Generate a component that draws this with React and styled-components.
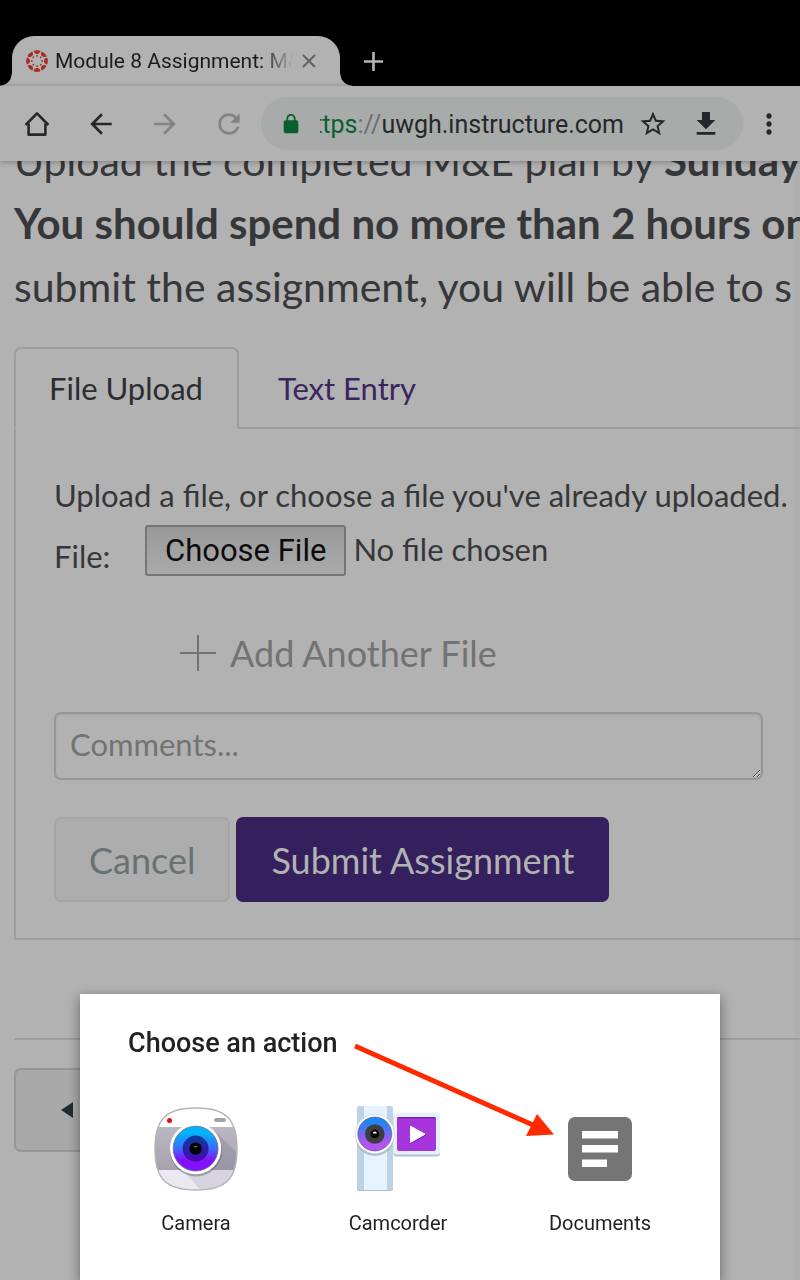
import React, { useState } from "react";
import styled, { createGlobalStyle, css } from "styled-components";

//tokens
const color = {
  page: "#b2b2b2",
  edge: "#aeaeae",
  pill: "#a8abaa",
  border: "#9c9ca2",
  ink: "#25282b",
  text: "#363739",
  muted: "#727373",
  faded: "#828282",
  purple: "#33205c",
  link: "#3b2560",
  secure: "#08602f",
  logo: "#a92a20",
  arrow: "#ff2a00",
};

const lato = `Lato, "Liberation Sans", sans-serif`;
const roboto = `Roboto, "Liberation Sans", sans-serif`;

const paths = {
  back: "M20 11H7.83l5.59-5.59L12 4l-8 8 8 8 1.41-1.41L7.83 13H20v-2z",
  forward: "M12 4l-1.41 1.41L16.17 11H4v2h12.17l-5.58 5.59L12 20l8-8z",
  reload:
    "M17.65 6.35C16.2 4.9 14.21 4 12 4c-4.42 0-7.99 3.58-7.99 8s3.57 8 7.99 8c3.73 0 6.84-2.55 7.73-6h-2.08c-.82 2.33-3.04 4-5.65 4-3.31 0-6-2.69-6-6s2.69-6 6-6c1.66 0 3.14.69 4.22 1.78L13 11h7V4l-2.35 2.35z",
  lock: "M18 8h-1V6c0-2.76-2.24-5-5-5S7 3.24 7 6v2H6c-1.1 0-2 .9-2 2v10c0 1.1.9 2 2 2h12c1.1 0 2-.9 2-2V10c0-1.1-.9-2-2-2zM8.9 8V6c0-1.71 1.39-3.1 3.1-3.1s3.1 1.39 3.1 3.1v2z",
  star: "M22 9.24l-7.19-.62L12 2 9.19 8.63 2 9.24l5.46 4.73L5.82 21 12 17.27 18.18 21l-1.63-7.03L22 9.24zM12 15.4l-3.76 2.27 1-4.28-3.32-2.88 4.38-.38L12 6.1l1.71 4.04 4.38.38-3.32 2.88 1 4.28L12 15.4z",
  download: "M19 9h-4V3H9v6H5l7 7 7-7zM5 18v2h14v-2H5z",
  more: "M12 8c1.1 0 2-.9 2-2s-.9-2-2-2-2 .9-2 2 .9 2 2 2zm0 2c-1.1 0-2 .9-2 2s.9 2 2 2 2-.9 2-2-.9-2-2-2zm0 6c-1.1 0-2 .9-2 2s.9 2 2 2 2-.9 2-2-.9-2-2-2z",
};

const Icon = ({ name, size = 32 }) => (
  <svg width={size} height={size} viewBox="0 0 24 24" fill="currentColor">
    <path d={paths[name]} />
  </svg>
);

const HomeIcon = () => (
  <svg width="26" height="26" viewBox="0 0 26 26" fill="none" stroke="currentColor" strokeWidth="2.6" strokeLinejoin="round">
    <path d="M4.6 12.4V23.6H21.4V12.4" />
    <path d="M1.6 14 13 2.4 24.4 14" />
  </svg>
);

const CrossIcon = () => (
  <svg width="14" height="14" viewBox="0 0 14 14" stroke="currentColor" strokeWidth="2">
    <path d="M1 1 13 13M13 1 1 13" />
  </svg>
);

const PlusIcon = ({ size, weight }) => (
  <svg width={size} height={size} viewBox="0 0 36 36" stroke="currentColor" strokeWidth={weight}>
    <path d="M18 0V36M0 18H36" />
  </svg>
);

//ring of eight domes with dots between them
const CanvasLogo = () => (
  <svg width="22" height="22" viewBox="-11 -11 22 22" fill={color.logo}>
    {[0, 45, 90, 135, 180, 225, 270, 315].map((deg) => (
      <g key={deg} transform={`rotate(${deg})`}>
        <path d="M-3.4-10.2a10.8 10.8 0 0 1 6.8 0C3.1-8.2 1.8-7 0-7S-3.1-8.2-3.4-10.2z" />
        <circle cx="0" cy="-5.2" r=".9" />
      </g>
    ))}
  </svg>
);

const CameraIcon = () => (
  <svg width="84" height="84" viewBox="0 0 84 84">
    <defs>
      <linearGradient id="camLens" x1="0" y1="0" x2="0" y2="1">
        <stop offset=".15" stopColor="#00b4ff" />
        <stop offset=".5" stopColor="#3d6bff" />
        <stop offset=".75" stopColor="#8510ff" />
      </linearGradient>
      <linearGradient id="camMid" x1="0" y1="0" x2="0" y2="1">
        <stop offset="0" stopColor="#0a3f9c" />
        <stop offset="1" stopColor="#4a06b4" />
      </linearGradient>
      <linearGradient id="camBand" x1="0" y1="0" x2="0" y2="1">
        <stop offset="0" stopColor="#bbb7c3" />
        <stop offset="1" stopColor="#a5a2ae" />
      </linearGradient>
      <clipPath id="camBody">
        <path d="M42 1C72 1 83 12 83 42S72 83 42 83 1 72 1 42 12 1 42 1z" />
      </clipPath>
    </defs>
    <g clipPath="url(#camBody)">
      <path fill="#fff" d="M0 0h84v84H0z" />
      <path fill="url(#camBand)" d="M0 20h84v43H0z" />
      <path fill="#ebe8f2" d="M0 63h84v21H0z" />
      <path fill="#8f8b9a" opacity=".5" d="M60 23 84 47v16H32z" />
      <path fill="#cfccd8" opacity=".7" d="M29 63h55v21H47z" />
    </g>
    <path fill="none" stroke="#b5b3b8" strokeWidth="1.4" d="M42 1C72 1 83 12 83 42S72 83 42 83 1 72 1 42 12 1 42 1z" />
    <circle cx="15.5" cy="13.6" r="2.5" fill="#ee0a0a" />
    <rect x="60" y="11" width="12" height="4" rx="2" fill="#a5a2ae" />
    <circle cx="42" cy="43.5" r="26" fill="#5e5a6b" opacity=".45" />
    <circle cx="41.6" cy="41.6" r="25.6" fill="#fff" />
    <circle cx="41.6" cy="41.6" r="22.4" fill="url(#camLens)" stroke="#5b6780" strokeWidth=".8" />
    <circle cx="41.6" cy="41.6" r="13" fill="url(#camMid)" />
    <circle cx="41.6" cy="41.6" r="6.2" fill="#000" />
    <path d="M39.4 40.2a2.4 1.8 0 0 1 4.4 0z" fill="#777" />
  </svg>
);

const CamcorderIcon = () => (
  <svg width="84" height="84" viewBox="0 0 84 84" overflow="visible">
    <defs>
      <linearGradient id="vidLens" x1="0" y1="0" x2="0" y2="1">
        <stop offset=".15" stopColor="#1e86f5" />
        <stop offset=".75" stopColor="#b353f2" />
      </linearGradient>
    </defs>
    <rect x="1" y="0" width="36" height="84" rx="2.5" fill="#a9bccb" />
    <rect x="1" y="-1" width="36" height="84" rx="2.5" fill="#bcd3e5" />
    <path fill="#e5f3ff" d="M8-1h23v84H8z" />
    <rect x="37.5" y="7" width="46.5" height="42.5" rx="3" fill="#b4c2ce" />
    <rect x="37.5" y="5.5" width="46.5" height="42" rx="3" fill="#e5f2fd" />
    <rect x="41" y="10" width="39" height="34" rx="2" fill="#a636dc" />
    <path fill="#7b22a8" d="M42 10h37l1 1.4H41z" />
    <path fill="#7b22a8" d="M54.5 20.4 70 28.6 54.5 37z" />
    <path fill="#fff" stroke="#fff" strokeLinejoin="round" d="M54.5 19.2 69 27.2 54.5 35.4z" />
    <circle cx="18.8" cy="29.8" r="19.2" fill="#9aaab8" opacity=".7" />
    <circle cx="18.8" cy="27" r="19.6" fill="#fff" stroke="#c3cdd6" strokeWidth=".6" />
    <circle cx="18.8" cy="27" r="17" fill="url(#vidLens)" stroke="#4a5c80" strokeWidth=".6" />
    <circle cx="18.8" cy="27" r="9.8" fill="#3e3e3e" />
    <circle cx="18.8" cy="27" r="4.4" fill="#000" />
    <path d="M16.8 26.4a2 1.8 0 0 1 4 0z" fill="#fff" />
  </svg>
);

const DocumentsIcon = () => (
  <svg width="84" height="84" viewBox="0 0 84 84">
    <rect x="10" y="10" width="64" height="64" rx="7" fill="#757575" />
    <path fill="#fff" d="M24 24h36v7.5H24zM24 38h36v7.5H24zM24 52.5h25v7.5H24z" />
  </svg>
);

const actions = [
  { id: 1, label: "Camera", icon: CameraIcon },
  { id: 2, label: "Camcorder", icon: CamcorderIcon },
  { id: 3, label: "Documents", icon: DocumentsIcon },
];

const App = () => {
  const [comment, setComment] = useState("");

  return (
    <>
      <GlobalStyle />
      <TabStrip>
        <BrowserTab>
          <CanvasLogo />
          <TabTitle>Module 8 Assignment: M&amp;E</TabTitle>
          <IconButton $width="18px" $tone="#626262" aria-label="Close tab">
            <CrossIcon />
          </IconButton>
        </BrowserTab>
        <IconButton $width="66px" $tone="#b2b2b2" aria-label="New tab">
          <PlusIcon size={19} weight={5} />
        </IconButton>
      </TabStrip>

      <Toolbar>
        <IconButton aria-label="Home">
          <HomeIcon />
        </IconButton>
        <IconButton aria-label="Back">
          <Icon name="back" />
        </IconButton>
        <IconButton $tone={color.faded} aria-label="Forward">
          <Icon name="forward" />
        </IconButton>
        <IconButton $tone={color.faded} aria-label="Reload">
          <Icon name="reload" />
        </IconButton>
        <Omnibox>
          <Secure>
            <Icon name="lock" size={22} />
          </Secure>
          <Address>
            <span>
              <span className="scheme">https</span>
              <span className="slashes">://</span>
              uwgh.instructure.com
            </span>
          </Address>
          <IconButton $width="53px" aria-label="Bookmark">
            <Icon name="star" size={30} />
          </IconButton>
          <IconButton $width="53px" aria-label="Download">
            <Icon name="download" />
          </IconButton>
        </Omnibox>
        <IconButton $width="52px" aria-label="Menu">
          <Icon name="more" />
        </IconButton>
      </Toolbar>

      <Page>
        <Instructions>
          Upload the completed M&amp;E plan by <strong>Sunday</strong>
          <br />
          <strong>You should spend no more than 2 hours on</strong>
          <br />
          submit the assignment, you will be able to s
        </Instructions>

        <Tabs>
          <Tab href="#upload" $active>
            File Upload
          </Tab>
          <Tab href="#text">Text Entry</Tab>
        </Tabs>

        <Panel>
          <p>Upload a file, or choose a file you've already uploaded.</p>
          <FileRow>
            <label htmlFor="file">File:</label>
            <FileInput id="file" type="file" />
          </FileRow>
          <AddFile>
            <PlusIcon size={36} weight={2} />
            Add Another File
          </AddFile>
          <Comments
            aria-label="Comments"
            placeholder="Comments..."
            value={comment}
            onChange={(e) => setComment(e.target.value)}
          />
          <Buttons>
            <Button>Cancel</Button>
            <Button $primary>Submit Assignment</Button>
          </Buttons>
        </Panel>

        <Divider />
        <Previous aria-label="Previous">
          <svg width="12" height="16" viewBox="0 0 12 16">
            <path d="M12 0V16L0 8z" fill="#222d30" />
          </svg>
        </Previous>
      </Page>

      <Sheet role="dialog" aria-labelledby="sheet-title">
        <h2 id="sheet-title">Choose an action</h2>
        <Actions>
          {actions.map(({ id, label, icon: Glyph }) => (
            <Action key={id}>
              <Glyph />
              {label}
            </Action>
          ))}
        </Actions>
        <Pointer width="202" height="96" viewBox="0 0 202 96">
          <path d="M2 4 180 83" stroke={color.arrow} strokeWidth="5" />
          <path d="M201 92.5 184 72 173 94z" fill={color.arrow} />
        </Pointer>
      </Sheet>
    </>
  );
};

const GlobalStyle = createGlobalStyle`
  *, *::before, *::after {
    box-sizing: border-box;
  }

  html {
    height: 100%;
    overflow: hidden;
  }

  body {
    margin: 0;
    height: 100%;
    overflow: hidden;
    background: linear-gradient(to left, ${color.edge} 5px, ${color.page} 5px);
    color: ${color.text};
    font-family: ${lato};
  }

  p, h2 {
    margin: 0;
  }

  button {
    border: 0;
    padding: 0;
    background: none;
    color: inherit;
    font: inherit;
  }

  svg {
    display: block;
    flex: none;
  }
`;

const Center = css`
  display: flex;
  align-items: center;
  justify-content: center;
`;

const IconButton = styled.button`
  ${Center}
  flex: none;
  width: ${(props) => props.$width || "64px"};
  height: 100%;
  color: ${(props) => props.$tone || color.ink};
`;

const TabStrip = styled.header`
  display: flex;
  height: 86px;
  padding: 36px 12px 0;
  background: #000;
`;

const BrowserTab = styled.div`
  position: relative;
  display: flex;
  align-items: center;
  gap: 7px;
  width: 328px;
  padding-left: 14px;
  border-radius: 22px 22px 0 0;
  background: ${color.page};

  /* flared feet */
  &::before,
  &::after {
    content: "";
    position: absolute;
    bottom: 0;
    width: 12px;
    height: 12px;
  }

  &::before {
    right: 100%;
    background: radial-gradient(circle at 0 0, #000 11px, ${color.page} 12px);
  }

  &::after {
    left: 100%;
    background: radial-gradient(circle at 100% 0, #000 11px, ${color.page} 12px);
  }
`;

const TabTitle = styled.span`
  flex: 0 1 238px;
  overflow: hidden;
  white-space: nowrap;
  font: 400 21px/28px ${roboto};
  color: #1c1c1c;
  mask-image: linear-gradient(to left, transparent, #000 32px);
`;

const Toolbar = styled.nav`
  position: relative;
  z-index: 1;
  display: flex;
  align-items: center;
  height: 75px;
  padding: 0 5px;
  background: ${color.page};
  box-shadow: 0 1px 6px rgba(0, 0, 0, 0.3);
`;

const Omnibox = styled.div`
  display: flex;
  align-items: center;
  flex: 1;
  min-width: 0;
  height: 53px;
  padding: 0 11px 0 19px;
  border-radius: 27px;
  background: ${color.pill};
`;

const Secure = styled.span`
  flex: none;
  margin-right: 18px;
  color: ${color.secure};
`;

const Address = styled.button`
  display: flex;
  justify-content: flex-end;
  flex: 1;
  min-width: 0;
  margin-right: 2px;
  padding-top: 2px;
  overflow: hidden;
  white-space: nowrap;
  font: 400 25px/34px ${roboto};
  color: ${color.ink};

  .scheme {
    color: ${color.secure};
  }

  .slashes {
    color: #6c6f6f;
  }
`;

const Page = styled.main`
  padding-left: 14px;
  font-size: 31px;
  line-height: 36px;
`;

/* scrolled up, its first line is half under the toolbar */
const Instructions = styled.p`
  margin-top: -32px;
  font-size: 41px;
  line-height: 63px;
  white-space: nowrap;

  strong {
    font-size: 42px;
    font-weight: 700;
  }
`;

const Tabs = styled.div`
  position: relative;
  display: flex;
  margin-top: 29px;
`;

const Tab = styled.a`
  height: 82px;
  padding: 21px 34px 21px 33px;
  margin-bottom: -2px;
  border: 2px solid transparent;
  border-radius: 7px 7px 0 0;
  color: ${color.link};
  text-decoration: none;

  ${(props) =>
    props.$active &&
    css`
      margin-right: 4px;
      border-color: ${color.border};
      border-bottom-color: ${color.page};
      background: ${color.page};
      color: #2c2d2f;
    `}
`;

const Panel = styled.section`
  padding: 48px 37px 36px 38px;
  border: 2px solid ${color.border};
  border-right: 0;

  p {
    white-space: nowrap;
  }
`;

const FileRow = styled.div`
  display: flex;
  align-items: flex-end;
  margin-top: 12px;

  label {
    width: 91px;
    line-height: 40px;
  }
`;

const FileInput = styled.input`
  flex: 1;
  height: 51px;
  font: 400 31px/36px ${lato};
  color: ${color.text};

  &::file-selector-button {
    height: 51px;
    margin: 0 7px 0 0;
    padding: 0 18px;
    border: 2px solid #757575;
    border-radius: 3px;
    background: linear-gradient(#999, #aaa);
    color: #0c0c0c;
    font: 400 31px/36px ${roboto};
  }
`;

const AddFile = styled.button`
  display: flex;
  align-items: center;
  gap: 14px;
  margin: 55px 0 0 126px;
  font-size: 36px;
  line-height: 44px;
  color: ${color.muted};
`;

const Comments = styled.textarea`
  display: block;
  width: 100%;
  height: 68px;
  margin-top: 37px;
  padding: 12px 14px;
  border: 2px solid #979797;
  border-radius: 7px;
  background: transparent;
  box-shadow: inset 0 2px 2px rgba(0, 0, 0, 0.06);
  color: inherit;
  font: 400 31px/36px ${lato};
  resize: vertical;
  overflow: hidden;

  &::placeholder {
    color: ${color.muted};
    opacity: 1;
  }
`;

const Buttons = styled.div`
  display: flex;
  gap: 6px;
  margin-top: 37px;
`;

const Button = styled.button`
  height: 85px;
  padding: 0 33px;
  border: 2px solid ${(props) => (props.$primary ? color.purple : "#a5a5a8")};
  border-radius: 7px;
  background: ${(props) => (props.$primary ? color.purple : "#adadad")};
  color: ${(props) => (props.$primary ? "#b2b2b2" : "#697173")};
  font-size: 36px;
  line-height: 44px;
`;

const Divider = styled.hr`
  margin: 98px 0 28px;
  border: 0;
  border-top: 2px solid ${color.border};
`;

const Previous = styled.button`
  display: flex;
  align-items: center;
  width: 200px;
  height: 84px;
  padding-left: 45px;
  border: 2px solid #949699;
  border-radius: 7px;
  background: #a9a9a9;
`;

const Sheet = styled.section`
  position: fixed;
  z-index: 2;
  bottom: 0;
  left: 10%;
  right: 10%;
  padding: 34px 19px 45px 15px;
  background: #fff;
  box-shadow: 0 4px 12px rgba(0, 0, 0, 0.45);
  color: #222;
  font-family: ${roboto};

  h2 {
    padding-left: 33px;
    font-size: 27px;
    font-weight: 500;
    line-height: 30px;
  }
`;

const Actions = styled.div`
  display: grid;
  grid-template-columns: repeat(3, 1fr);
  margin-top: 49px;
`;

const Action = styled.button`
  display: flex;
  flex-direction: column;
  align-items: center;
  gap: 20px;
  font-size: 20px;
  line-height: 24px;
`;

const Pointer = styled.svg`
  position: absolute;
  top: 48px;
  left: 273px;
`;

export default App;
